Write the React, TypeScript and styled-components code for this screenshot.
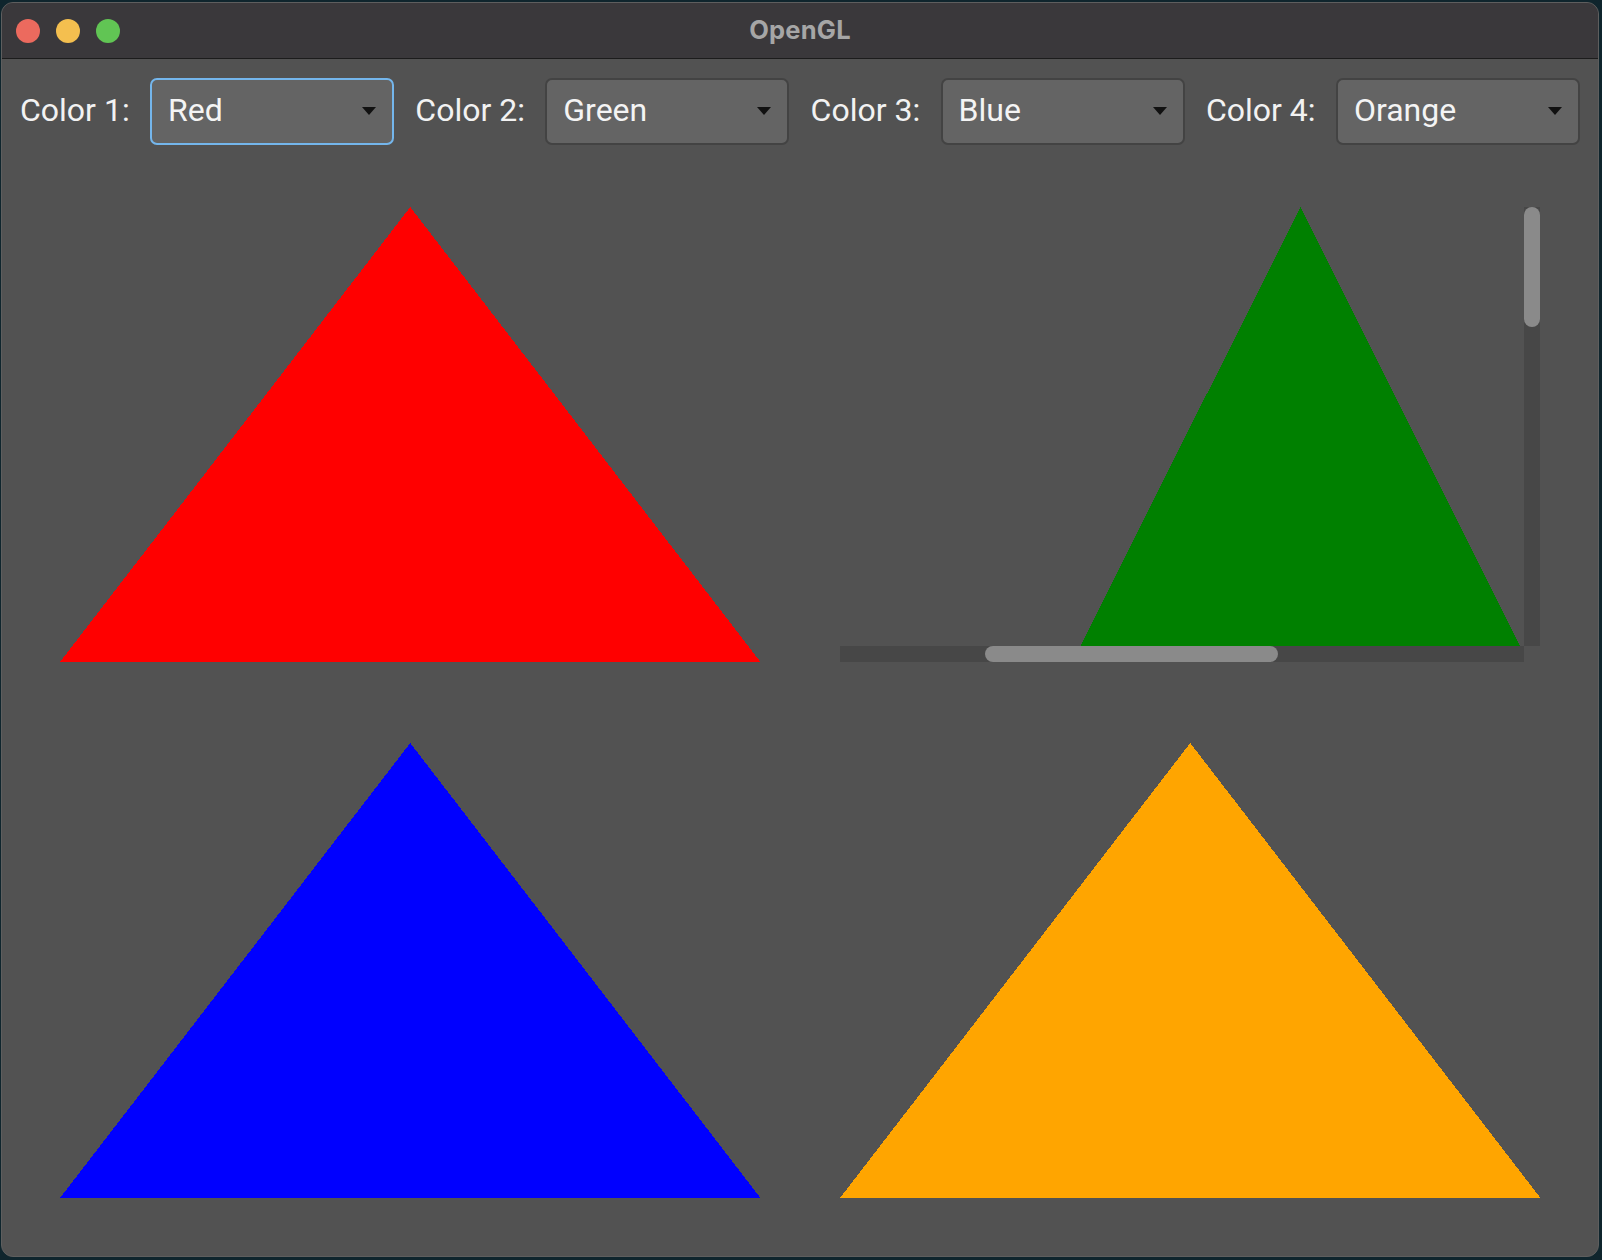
import React from "react";
import styled, { createGlobalStyle } from "styled-components";

const GlobalStyle = createGlobalStyle`
  html, body {
    margin: 0;
    padding: 0;
    width: 1602px;
    height: 1260px;
    overflow: hidden;
    background: #0f252d;
    font-family: Roboto, "Liberation Sans", sans-serif;
  }
  * { box-sizing: border-box; }
`;

const Desktop = styled.div`
  width: 1602px;
  height: 1260px;
  padding: 2px 3px 3px 1px;
`;

const Window = styled.div`
  width: 1598px;
  height: 1255px;
  border: 1px solid #5e5e5e;
  border-radius: 12px;
  overflow: hidden;
  display: flex;
  flex-direction: column;
  background: #525252;
`;

const TitleBar = styled.div`
  height: 56px;
  flex: none;
  background: #3a383b;
  border-bottom: 1px solid #1c1c1c;
  display: grid;
  grid-template-columns: 1fr auto 1fr;
  align-items: center;
  padding: 0 14px;
`;

const Lights = styled.div`
  display: flex;
  gap: 16px;
  align-items: center;
`;

const Light = styled.span<{ $c: string }>`
  width: 24px;
  height: 24px;
  border-radius: 50%;
  background: ${(p) => p.$c};
`;

const Title = styled.div`
  font-family: Inter, "Open Sans", sans-serif;
  font-weight: 700;
  font-size: 25.5px;
  color: #a6a6a6;
  letter-spacing: 0.2px;
  padding-bottom: 2px;
`;

const Content = styled.div`
  flex: 1;
  display: flex;
  flex-direction: column;
  min-height: 0;
`;

const Toolbar = styled.div`
  display: flex;
  gap: 21.3px;
  padding: 19px 0 0 18px;
  flex: none;
`;

const Group = styled.div`
  display: grid;
  grid-template-columns: 130px 244px;
  align-items: center;
`;

const Label = styled.span`
  font-size: 32px;
  color: #f2f2f2;
  padding-bottom: 4px;
  white-space: nowrap;
`;

const Combo = styled.div<{ $focused?: boolean }>`
  height: 67px;
  border-radius: 7px;
  background: #646464;
  border: 2px solid ${(p) => (p.$focused ? "#74b6ec" : "#434343")};
  display: flex;
  align-items: center;
  justify-content: space-between;
  padding: 0 16px 4px 16px;
  font-size: 32px;
  color: #f4f4f4;
`;

const Arrow = styled.span`
  width: 0;
  height: 0;
  border-left: 7.5px solid transparent;
  border-right: 7.5px solid transparent;
  border-top: 8px solid #111;
  margin-top: 3px;
`;

const Canvas = styled.div`
  flex: 1;
  display: grid;
  grid-template-columns: 1fr 1fr;
  grid-template-rows: 1fr 1fr;
  gap: 81px 79px;
  padding: 62px 58px 58px 58px;
  min-height: 0;
`;

const Pane = styled.div`
  min-width: 0;
  min-height: 0;
  display: flex;
`;

const Shape = styled.svg`
  width: 100%;
  height: 100%;
  display: block;
`;

const ScrollPane = styled.div`
  min-width: 0;
  min-height: 0;
  display: grid;
  grid-template-columns: 1fr 16px;
  grid-template-rows: 1fr 16px;
`;

const Viewport = styled.div`
  overflow: hidden;
  min-width: 0;
  min-height: 0;
`;

const VTrack = styled.div`
  background: #474747;
  position: relative;
`;

const HTrack = styled.div`
  background: #474747;
  position: relative;
`;

const Corner = styled.div`
  background: transparent;
`;

const VThumb = styled.div`
  position: absolute;
  left: 0;
  right: 0;
  border-radius: 8px;
  background: #8a8a8a;
`;

const HThumb = styled.div`
  position: absolute;
  top: 0;
  bottom: 0;
  border-radius: 8px;
  background: #8a8a8a;
`;

const Triangle: React.FC<{ color: string }> = ({ color }) => (
  <Shape viewBox="0 0 100 100" preserveAspectRatio="none">
    <polygon points="50,0 0,100 100,100" fill={color} shapeRendering="crispEdges" />
  </Shape>
);

const scrollData = {
  content: { w: 1600, h: 1600 },
  viewport: { w: 684, h: 439 },
  scroll: { x: 340, y: 0 },
};

const ScrolledTriangle: React.FC<{ color: string }> = ({ color }) => {
  const { content, viewport, scroll } = scrollData;
  const hLeft = (scroll.x / content.w) * 100;
  const hWidth = (viewport.w / content.w) * 100;
  const vTop = (scroll.y / content.h) * 100;
  const vHeight = (viewport.h / content.h) * 100;
  return (
    <ScrollPane>
      <Viewport>
        <Shape
          viewBox={`${scroll.x} ${scroll.y} ${viewport.w} ${viewport.h}`}
          preserveAspectRatio="none"
        >
          <polygon
            points={`${content.w / 2},0 0,${content.h} ${content.w},${content.h}`}
            fill={color}
            shapeRendering="crispEdges"
          />
        </Shape>
      </Viewport>
      <VTrack>
        <VThumb style={{ top: `${vTop}%`, height: `${vHeight}%` }} />
      </VTrack>
      <HTrack>
        <HThumb style={{ left: `${hLeft}%`, width: `${hWidth}%` }} />
      </HTrack>
      <Corner />
    </ScrollPane>
  );
};

const selectors = [
  { label: "Color 1:", value: "Red", focused: true },
  { label: "Color 2:", value: "Green" },
  { label: "Color 3:", value: "Blue" },
  { label: "Color 4:", value: "Orange" },
];

export default function App() {
  return (
    <>
      <GlobalStyle />
      <Desktop>
        <Window>
          <TitleBar>
            <Lights>
              <Light $c="#ec6a5e" />
              <Light $c="#f4bf4f" />
              <Light $c="#61c554" />
            </Lights>
            <Title>OpenGL</Title>
            <div />
          </TitleBar>
          <Content>
            <Toolbar>
              {selectors.map((s) => (
                <Group key={s.label}>
                  <Label>{s.label}</Label>
                  <Combo $focused={s.focused}>
                    <span>{s.value}</span>
                    <Arrow />
                  </Combo>
                </Group>
              ))}
            </Toolbar>
            <Canvas>
              <Pane>
                <Triangle color="#ff0000" />
              </Pane>
              <ScrolledTriangle color="#008000" />
              <Pane>
                <Triangle color="#0000ff" />
              </Pane>
              <Pane>
                <Triangle color="#ffa500" />
              </Pane>
            </Canvas>
          </Content>
        </Window>
      </Desktop>
    </>
  );
}
